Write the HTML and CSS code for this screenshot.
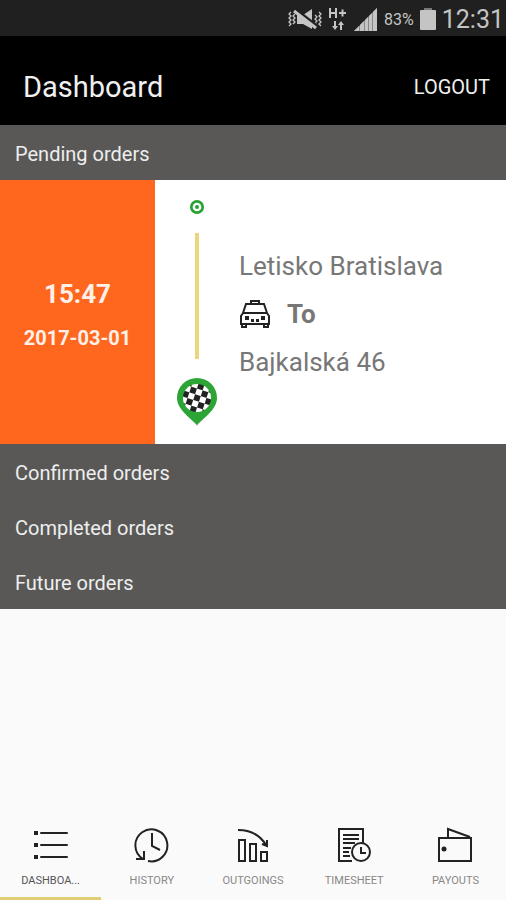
FILE: index.html
```html
<!DOCTYPE html>
<html lang="en">
<head>
	<meta charset="UTF-8">
	<meta name="viewport" content="width=device-width, initial-scale=1">
	<title>Dashboard</title>
	<link rel="stylesheet" href="styles.css">
</head>
<body>
	<div class="status">
		<svg class="mute" width="34" height="22" viewBox="0 0 34 22">
			<path d="M3 4l-2 2 2 2-2 2 2 2-2 2 2 2-2 2M7 6l-2 2 2 2-2 2 2 2-2 2M31 4l2 2-2 2 2 2-2 2 2 2-2 2 2 2M27 7l2 2-2 2 2 2-2 2 2 2" fill="none" stroke="#c4c4c4" stroke-width="1.3"/>
			<path d="M9 7h6l9-6v20l-9-5H9z" fill="#c4c4c4"/>
			<path d="M7 1l22 17" stroke="#202020" stroke-width="3"/>
			<path d="M6 3l22 17" stroke="#c4c4c4" stroke-width="3"/>
		</svg>
		<svg class="data" width="20" height="26" viewBox="0 0 20 26">
			<path d="M2 2v10M8 2v10M2 7h6M11 7h7M14.500 3.500v7" fill="none" stroke="#c4c4c4" stroke-width="2"/>
			<path d="M6 15h2v5h2l-3 4-3-4h2zM12 24h2v-5h2l-3-4-3 4h2z" fill="#c4c4c4"/>
		</svg>
		<svg class="signal" width="24" height="24" viewBox="0 0 24 24">
			<path d="M0 24L23 1v23z" fill="#888"/>
			<path d="M0 24l5-5v5zM6 24v-6l4-4v10zM11 24V13l3-3v14zM15 24V9l3-3v18zM19 24V5l4-4v23z" fill="#c4c4c4"/>
		</svg>
		<span class="percent">83%</span>
		<svg class="battery" width="16" height="22" viewBox="0 0 16 22">
			<path d="M4 0h8v2H4z" fill="#777"/>
			<rect y="2" width="16" height="20" rx="1" fill="#c4c4c4"/>
		</svg>
		<span class="clock">12:31</span>
	</div>

	<header class="header">
		<h1 class="title">Dashboard</h1>
		<button class="logout" type="button">LOGOUT</button>
	</header>

	<main class="orders">
		<button class="group" type="button">Pending orders</button>
		<article class="order">
			<div class="when">
				<p class="time">15:47</p>
				<p class="date">2017-03-01</p>
			</div>
			<div class="route">
				<svg width="16" height="16" viewBox="0 0 16 16">
					<circle cx="8" cy="8" r="5.700" fill="#fff" stroke="#27a333" stroke-width="2.700"/>
					<circle cx="8" cy="8" r="2" fill="#27a333"/>
				</svg>
				<span class="line"></span>
				<svg width="42" height="50" viewBox="0 0 42 50">
					<defs>
						<pattern id="checks" width="12" height="12" patternUnits="userSpaceOnUse" patternTransform="rotate(18 21 21) translate(18 18)">
							<rect width="12" height="12" fill="#fff"/>
							<path d="M0 0h6v6H0zM6 6h6v6H6z" fill="#222"/>
						</pattern>
					</defs>
					<path d="M5 32L21 49l16-17z" fill="#ccc"/>
					<path d="M21 48C16 42 1 33 1 21a20 20 0 0 1 40 0c0 12-15 21-20 27z" fill="#2ca536"/>
					<circle cx="21" cy="21" r="14" fill="url(#checks)"/>
				</svg>
			</div>
			<div class="places">
				<p class="place">Letisko Bratislava</p>
				<p class="to">
					<svg width="32" height="30" viewBox="0 0 32 30" fill="none" stroke="#222" stroke-width="2">
						<path d="M12 5V2h8v3M7 5h18l3 9H4zM4 14l-2 3v8h28v-8l-2-3"/>
						<path d="M3 25v3h4v-3M25 25v3h4v-3" stroke-width="2"/>
						<path d="M6 17h4v4H6zM22 17h4v4h-4zM12 20h3v3h-3zM17 20h3v3h-3z" fill="#222" stroke="none"/>
					</svg>
					<span>To</span>
				</p>
				<p class="place">Bajkalská 46</p>
			</div>
		</article>
		<button class="group" type="button">Confirmed orders</button>
		<button class="group" type="button">Completed orders</button>
		<button class="group" type="button">Future orders</button>
	</main>

	<nav class="tabs">
		<a class="tab active" href="#dashboard">
			<svg class="icon" viewBox="0 0 36 36">
				<path d="M8 6h26M8 18h26M8 30h26" stroke-linecap="round"/>
				<path d="M1 4h4v4H1zM1 16h4v4H1zM1 28h4v4H1z" fill="#222" stroke="none"/>
			</svg>
			<span>DASHBOA...</span>
		</a>
		<a class="tab" href="#history">
			<svg class="icon" viewBox="0 0 36 36">
				<path d="M14 34A16 16 0 1 0 9 32M2 32h8v-8M18 6v13l8 4"/>
			</svg>
			<span>HISTORY</span>
		</a>
		<a class="tab" href="#outgoings">
			<svg class="icon" viewBox="0 0 36 36">
				<path d="M4 13h6v21H4zM15 17h6v17h-6zM26 25h6v9h-6zM3 3c13 0 22 5 28 15M32 13v6l-5-2"/>
			</svg>
			<span>OUTGOINGS</span>
		</a>
		<a class="tab" href="#timesheet">
			<svg class="icon" viewBox="0 0 36 36">
				<path d="M16 34H3V2h24v14M7 8h16M7 12h16M7 16h12M7 21h8M7 25h6M7 29h7"/>
				<circle cx="25" cy="25" r="9"/>
				<path d="M25 20v6h5"/>
			</svg>
			<span>TIMESHEET</span>
		</a>
		<a class="tab" href="#payouts">
			<svg class="icon" viewBox="0 0 36 36">
				<path d="M2 11h32v23H2zM11 11V2l22 8"/>
				<circle cx="7" cy="22" r="2.500" fill="#222" stroke="none"/>
			</svg>
			<span>PAYOUTS</span>
		</a>
	</nav>
</body>
</html>
```
FILE: styles.css
```css
* {
	box-sizing: border-box;
	margin: 0;
	padding: 0;
}
body {
	display: flex;
	flex-direction: column;
	min-height: 100vh;
	background: #fafafa;
	font-family: Roboto, "Liberation Sans", sans-serif;
}
button {
	border: none;
	background: none;
	font-family: inherit;
	cursor: pointer;
}

/* phone status bar */
.status {
	display: flex;
	align-items: center;
	justify-content: flex-end;
	gap: 6px;
	height: 36px;
	padding: 2px 2px 0 0;
	background: #202020;
	color: #c4c4c4;
}
.percent {
	font-size: 16px;
}
.clock {
	font-size: 25px;
}

.header {
	display: flex;
	align-items: center;
	justify-content: space-between;
	height: 89px;
	padding: 12px 16px 0 23px;
	background: #000;
	color: #f0f0f0;
}
.title {
	font-size: 29px;
	font-weight: 400;
}
.logout {
	font-size: 20px;
	color: #f0f0f0;
}

.orders {
	display: flex;
	flex-direction: column;
}
.group {
	height: 55px;
	padding: 2px 15px 0;
	background: #595856;
	color: #eee;
	font-size: 20px;
	text-align: left;
}
.order {
	display: flex;
	min-height: 264px;
	background: #fff;
}
.when {
	display: flex;
	flex-direction: column;
	align-items: center;
	justify-content: center;
	gap: 17px;
	width: 155px;
	padding-top: 4px;
	background: #ff671f;
	color: #fff0e8;
	font-weight: 700;
}
.time {
	font-size: 26px;
	line-height: 30px;
}
.date {
	font-size: 20px;
	line-height: 24px;
}
.route {
	display: flex;
	flex-direction: column;
	align-items: center;
	gap: 18px;
	width: 84px;
	padding: 19px 0 17px;
}
.line {
	flex: 1;
	width: 4px;
	background: #ebd67c;
}
.places {
	display: flex;
	flex: 1;
	flex-direction: column;
	justify-content: center;
	gap: 16px;
	padding-top: 4px;
	color: #777;
	font-size: 26px;
	line-height: 32px;
}
.to {
	display: flex;
	align-items: center;
	gap: 16px;
	font-weight: 700;
}

.tabs {
	display: flex;
	margin-top: auto;
}
.tab {
	display: flex;
	flex: 1;
	flex-direction: column;
	align-items: center;
	gap: 10px;
	height: 73px;
	border-bottom: 3px solid transparent;
	color: #888;
	font-size: 11px;
	line-height: 16px;
	text-decoration: none;
}
.active {
	border-color: #e0cf72;
	color: #555;
}
.icon {
	width: 36px;
	height: 36px;
	fill: none;
	stroke: #222;
	stroke-width: 2;
}
```
